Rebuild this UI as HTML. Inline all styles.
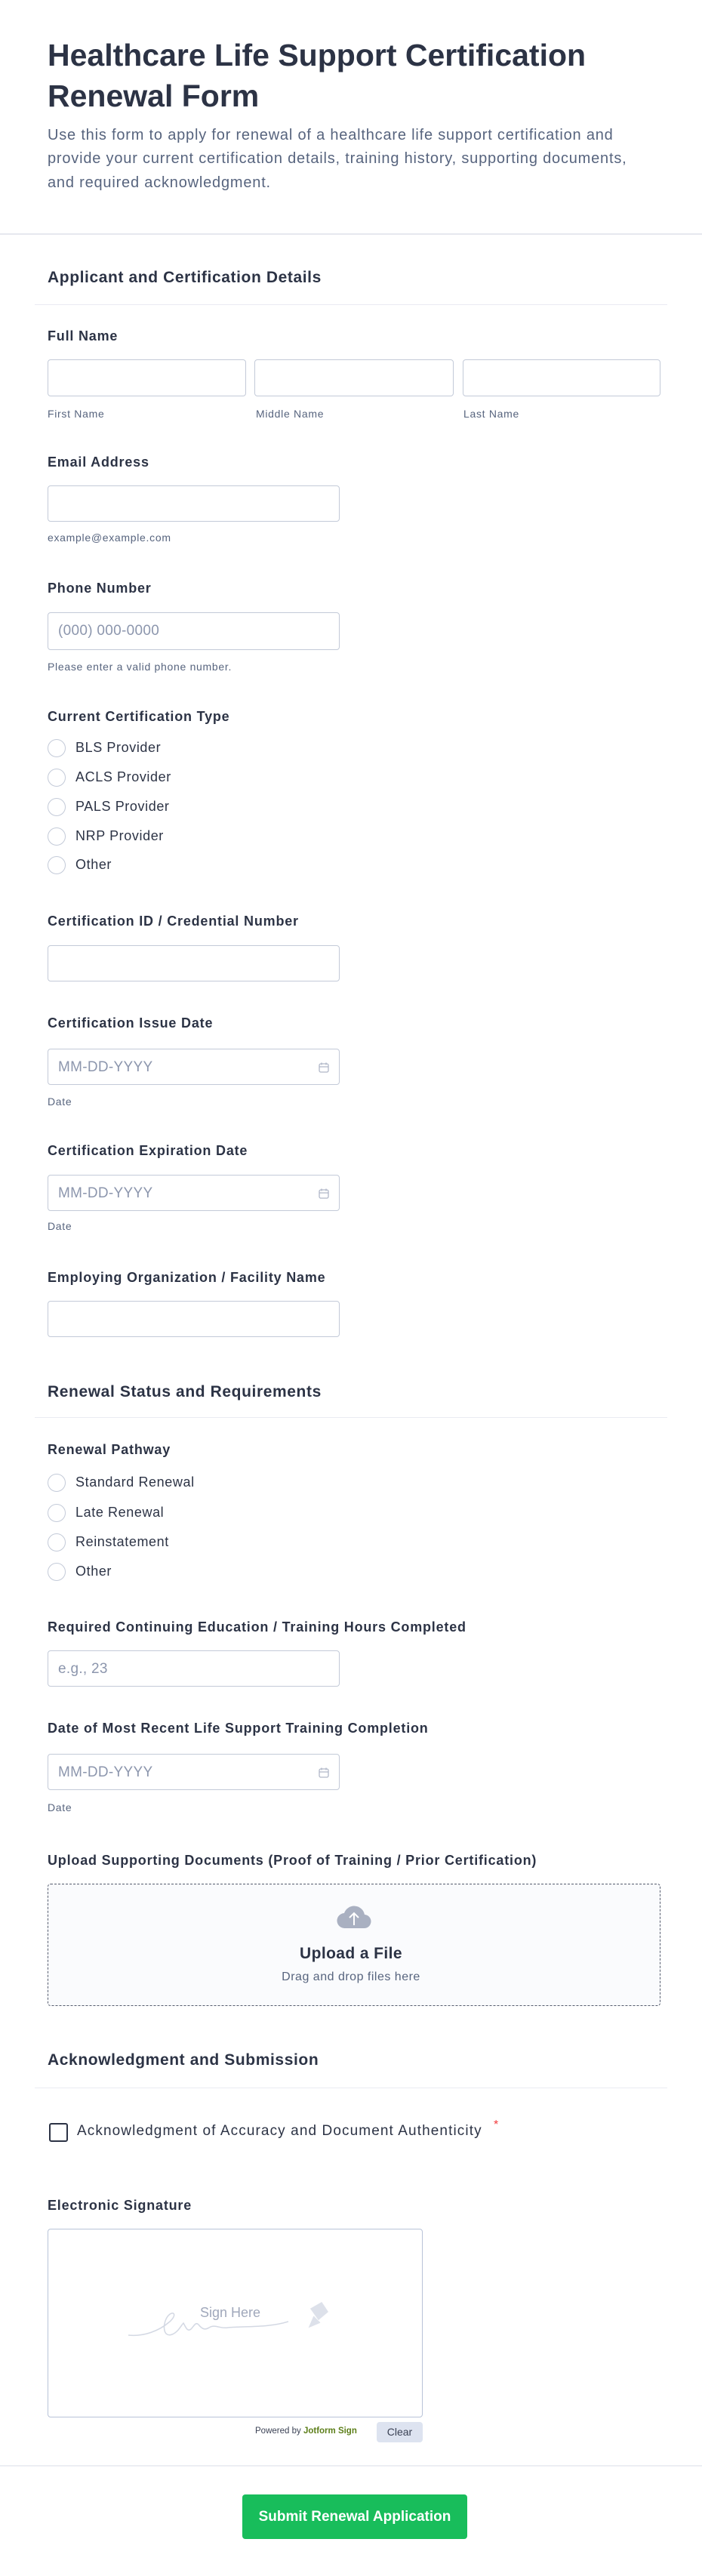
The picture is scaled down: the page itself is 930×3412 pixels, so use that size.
<!DOCTYPE html>
<html><head><meta charset="utf-8"><style>
*{box-sizing:border-box;margin:0;padding:0}
body{width:930px;height:3412px;background:#fff;font-family:"Liberation Sans",sans-serif;color:#2c3345;position:relative;overflow:hidden}
.a{position:absolute;white-space:nowrap}
.t{font-size:41px;font-weight:700;color:#2c3345;left:63px}
.d{font-size:20px;color:#57647e;left:63px;letter-spacing:0.8px}
.h{font-size:21px;font-weight:700;left:63px;letter-spacing:0.6px}
.hl{position:absolute;left:46px;width:838px;height:1px;background:#eaebf2}
.l{font-size:18px;left:63px;color:#2c3345;font-weight:700;letter-spacing:0.8px}
.in{position:absolute;border:1px solid #c3cad8;border-radius:4px;background:#fff;height:49px}
.s{font-size:14px;color:#57647e;letter-spacing:0.7px}
.r{position:absolute;left:63px;width:24px;height:24px;border:1px solid #c3cad8;border-radius:50%}
.rl{font-size:18px;left:100px;letter-spacing:0.6px}
.ph{font-size:19px;color:#8c96ad;position:absolute;left:13px;top:13px;letter-spacing:0.3px}
</style></head><body>
<div class="a t" style="top:50px">Healthcare Life Support Certification</div>
<div class="a t" style="top:104px">Renewal Form</div>
<div class="a d" style="top:168px">Use this form to apply for renewal of a healthcare life support certification and</div>
<div class="a d" style="top:199px">provide your current certification details, training history, supporting documents,</div>
<div class="a d" style="top:231px">and required acknowledgment.</div>
<div style="position:absolute;left:0;top:309px;width:930px;height:2px;background:#e6e8ef"></div>

<div class="a h" style="top:356px">Applicant and Certification Details</div>
<div class="hl" style="top:403px"></div>
<div class="a l" style="top:435px">Full Name</div>
<div class="in" style="left:63px;top:476px;width:263px"></div>
<div class="in" style="left:337px;top:476px;width:264px"></div>
<div class="in" style="left:613px;top:476px;width:262px"></div>
<div class="a s" style="left:63px;top:540px">First Name</div>
<div class="a s" style="left:339px;top:540px">Middle Name</div>
<div class="a s" style="left:614px;top:540px">Last Name</div>

<div class="a l" style="top:602px">Email Address</div>
<div class="in" style="left:63px;top:643px;width:387px;height:48px"></div>
<div class="a s" style="left:63px;top:704px">example@example.com</div>

<div class="a l" style="top:769px">Phone Number</div>
<div class="in" style="left:63px;top:811px;width:387px;height:50px"><span class="ph">(000) 000-0000</span></div>
<div class="a s" style="left:63px;top:875px">Please enter a valid phone number.</div>

<div class="a l" style="top:939px">Current Certification Type</div>
<div class="r" style="top:979px"></div><div class="a rl" style="top:980px">BLS Provider</div>
<div class="r" style="top:1018px"></div><div class="a rl" style="top:1019px">ACLS Provider</div>
<div class="r" style="top:1057px"></div><div class="a rl" style="top:1058px">PALS Provider</div>
<div class="r" style="top:1096px"></div><div class="a rl" style="top:1097px">NRP Provider</div>
<div class="r" style="top:1134px"></div><div class="a rl" style="top:1135px">Other</div>

<div class="a l" style="top:1210px">Certification ID / Credential Number</div>
<div class="in" style="left:63px;top:1252px;width:387px;height:48px"></div>

<div class="a l" style="top:1345px">Certification Issue Date</div>
<div class="in" style="left:63px;top:1389px;width:387px;height:48px"><span class="ph">MM-DD-YYYY</span>
<svg style="position:absolute;right:12px;top:16px" width="16" height="16" viewBox="0 0 16 16" fill="none" stroke="#b0b7c8" stroke-width="1.3"><rect x="2" y="3" width="12" height="11" rx="2"/><path d="M2 7h12M5 1.5v3M11 1.5v3"/></svg></div>
<div class="a s" style="left:63px;top:1451px">Date</div>

<div class="a l" style="top:1514px">Certification Expiration Date</div>
<div class="in" style="left:63px;top:1556px;width:387px;height:48px"><span class="ph">MM-DD-YYYY</span>
<svg style="position:absolute;right:12px;top:16px" width="16" height="16" viewBox="0 0 16 16" fill="none" stroke="#b0b7c8" stroke-width="1.3"><rect x="2" y="3" width="12" height="11" rx="2"/><path d="M2 7h12M5 1.5v3M11 1.5v3"/></svg></div>
<div class="a s" style="left:63px;top:1616px">Date</div>

<div class="a l" style="top:1682px">Employing Organization / Facility Name</div>
<div class="in" style="left:63px;top:1723px;width:387px;height:48px"></div>

<div class="a h" style="top:1832px">Renewal Status and Requirements</div>
<div class="hl" style="top:1877px"></div>
<div class="a l" style="top:1910px">Renewal Pathway</div>
<div class="r" style="top:1952px"></div><div class="a rl" style="top:1953px">Standard Renewal</div>
<div class="r" style="top:1992px"></div><div class="a rl" style="top:1993px">Late Renewal</div>
<div class="r" style="top:2031px"></div><div class="a rl" style="top:2032px">Reinstatement</div>
<div class="r" style="top:2070px"></div><div class="a rl" style="top:2071px">Other</div>

<div class="a l" style="top:2145px">Required Continuing Education / Training Hours Completed</div>
<div class="in" style="left:63px;top:2186px;width:387px;height:48px"><span class="ph">e.g., 23</span></div>

<div class="a l" style="top:2279px">Date of Most Recent Life Support Training Completion</div>
<div class="in" style="left:63px;top:2323px;width:387px;height:48px"><span class="ph">MM-DD-YYYY</span>
<svg style="position:absolute;right:12px;top:16px" width="16" height="16" viewBox="0 0 16 16" fill="none" stroke="#b0b7c8" stroke-width="1.3"><rect x="2" y="3" width="12" height="11" rx="2"/><path d="M2 7h12M5 1.5v3M11 1.5v3"/></svg></div>
<div class="a s" style="left:63px;top:2386px">Date</div>

<div class="a l" style="top:2454px">Upload Supporting Documents (Proof of Training / Prior Certification)</div>
<div style="position:absolute;left:63px;top:2495px;width:812px;height:162px;border:1.5px dashed #555c6e;border-radius:4px;background:#fafbfd"></div>
<svg style="position:absolute;left:445px;top:2522px" width="48" height="34" viewBox="0 0 48 34"><path d="M12 32a10 10 0 0 1-1-20 14 14 0 0 1 27 2 9 9 0 0 1-1 18z" fill="#a9b0c1"/><path d="M24 28V12M18 18l6-6 6 6" stroke="#fff" stroke-width="2" fill="none"/></svg>
<div class="a" style="left:0;width:930px;text-align:center;top:2576px;font-size:21px;font-weight:700;letter-spacing:0.4px">Upload a File</div>
<div class="a" style="left:0;width:930px;text-align:center;top:2610px;font-size:16px;color:#57647e;letter-spacing:0.5px">Drag and drop files here</div>

<div class="a h" style="top:2717px">Acknowledgment and Submission</div>
<div class="hl" style="top:2765px"></div>
<div style="position:absolute;left:65px;top:2812px;width:25px;height:25px;border:2px solid #2c3345;border-radius:3px"></div>
<div class="a" style="left:102px;top:2812px;font-size:19px;letter-spacing:1.1px">Acknowledgment of Accuracy and Document Authenticity</div>
<div class="a" style="left:654px;top:2806px;font-size:16px;color:#f23a3c">*</div>

<div class="a l" style="top:2911px">Electronic Signature</div>
<div style="position:absolute;left:63px;top:2952px;width:497px;height:250px;border:1px solid #b8c3d8;border-radius:4px"></div>
<div class="a" style="left:265px;top:3053px;font-size:18px;color:#a0a8bb">Sign Here</div>
<svg style="position:absolute;left:168px;top:3048px" width="285" height="60" viewBox="0 0 285 60" fill="none" stroke="#d3d8e3" stroke-width="1.5"><path d="M2 45c20 2 40-5 55-18 10-9 5-15-2-8-8 9-8 30 5 25 8-3 12-12 15-15 3 5 5 12 10 8 4-4 6-10 10-6 4 5 8 8 14 4 8-5 15 2 25 0 25-2 55 0 80-8"/><path d="M244 10l14-8 8 12-12 10z M248 20l-6 14 14-6" fill="#dde1ea" stroke="#dde1ea"/></svg>
<div class="a" style="left:338px;top:3214px;font-size:11.5px;color:#3b4255">Powered by <b style="color:#5d7f1a">Jotform Sign</b></div>
<div style="position:absolute;left:499px;top:3208px;width:61px;height:27px;background:#dde3f0;border-radius:4px;font-size:14px;color:#3b4255;text-align:center;line-height:27px">Clear</div>

<div style="position:absolute;left:0;top:3265px;width:930px;height:2px;background:#eceef3"></div>
<div style="position:absolute;left:321px;top:3304px;width:298px;height:59px;background:#18bd5b;border-radius:4px;color:#fff;font-size:19px;font-weight:700;text-align:center;line-height:59px">Submit Renewal Application</div>
</body></html>
